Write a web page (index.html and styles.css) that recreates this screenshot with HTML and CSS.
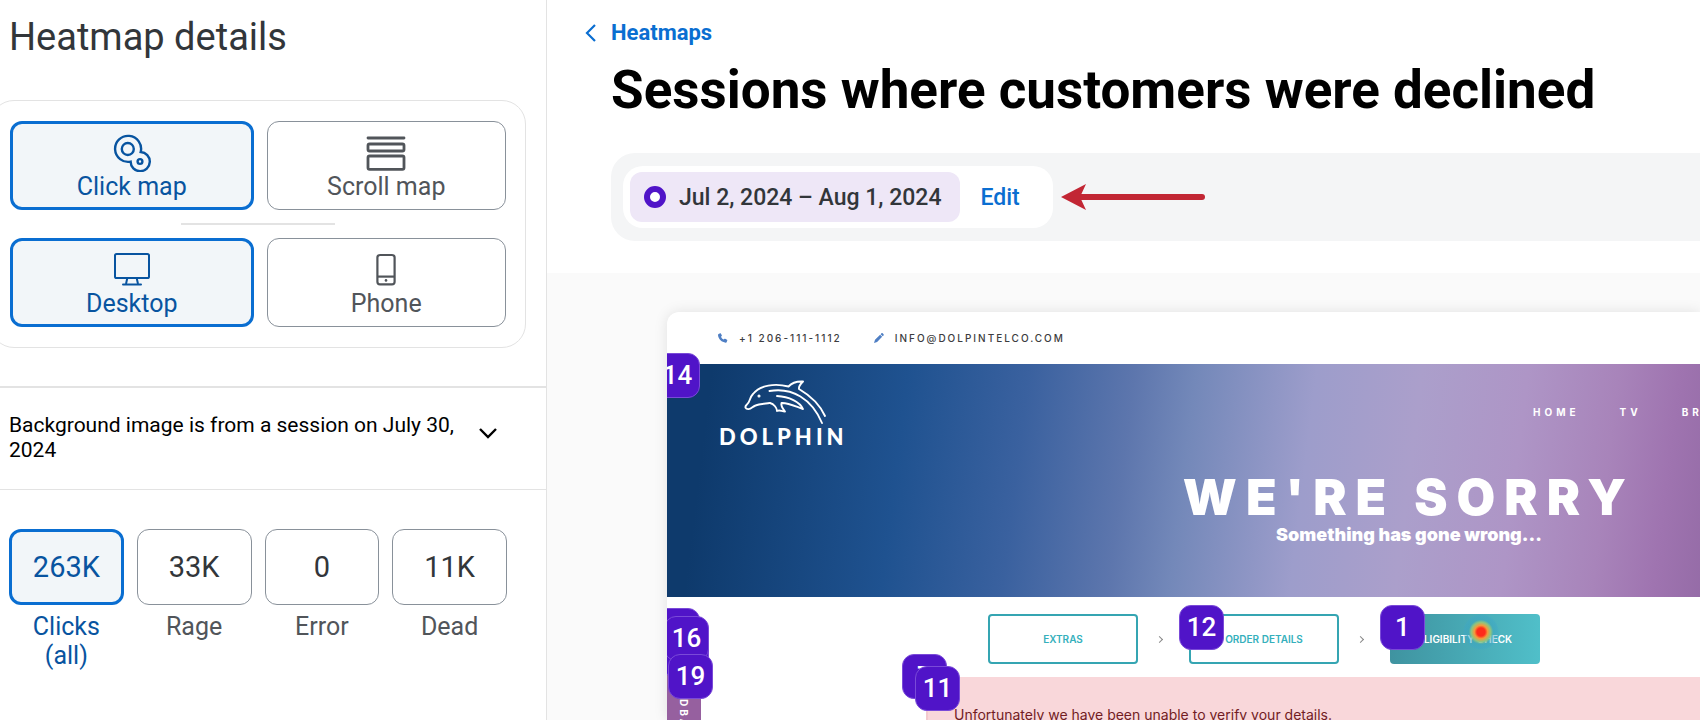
FILE: index.html
```html
<!DOCTYPE html>
<html lang="en">
<head>
    <meta charset="UTF-8">
    <meta name="viewport" content="width=device-width, initial-scale=1.0">
    <title>Heatmap details</title>
    <link rel="stylesheet" href="styles.css">
</head>
<body>
    <aside class="sidebar">
        <h2>Heatmap details</h2>
        <div class="options">
            <div class="option-row">
                <button class="option selected">
                    <svg width="38" height="38" viewBox="0 0 38 38" fill="none" stroke="currentColor" stroke-width="2.4">
                        <path d="M17.6 27.6A13 13 0 1 1 27.7 18A9.6 9.6 0 1 1 17.6 27.6Z"/>
                        <circle cx="14.8" cy="15" r="6"/>
                        <circle cx="27" cy="27.5" r="2.4"/>
                    </svg>
                    <span>Click map</span>
                </button>
                <button class="option">
                    <svg width="40" height="38" viewBox="0 0 40 38" fill="none" stroke="currentColor" stroke-width="2.8">
                        <path d="M2 4h36" stroke-linecap="round"/>
                        <rect x="2" y="10" width="36" height="7" rx="1.6"/>
                        <rect x="2" y="22" width="36" height="13.4" rx="1.6"/>
                    </svg>
                    <span>Scroll map</span>
                </button>
            </div>
            <hr class="option-line">
            <div class="option-row">
                <button class="option selected">
                    <svg width="38" height="38" viewBox="0 0 38 38" fill="none" stroke="currentColor" stroke-width="2">
                        <rect x="2" y="3" width="34" height="24" rx="1.6"/>
                        <path d="M14.2 27.5L13 33M23.8 27.5L25 33"/>
                        <path d="M10 33.5h18" stroke-linecap="round"/>
                    </svg>
                    <span>Desktop</span>
                </button>
                <button class="option">
                    <svg width="38" height="38" viewBox="0 0 38 38" fill="none" stroke="currentColor" stroke-width="2.2">
                        <rect x="10.4" y="4" width="17.2" height="29.4" rx="2.6"/>
                        <path d="M10.4 25.6h17.2"/>
                        <circle cx="19" cy="29.4" r="1.3" fill="currentColor" stroke="none"/>
                    </svg>
                    <span>Phone</span>
                </button>
            </div>
        </div>
        <div class="background-info">
            <p>Background image is from a session on July 30, 2024</p>
            <button class="expand" aria-label="Expand">
                <svg width="20" height="12" viewBox="0 0 20 12" fill="none" stroke="currentColor" stroke-width="2.4">
                    <path d="M2 2l8 8 8-8"/>
                </svg>
            </button>
        </div>
        <div class="stats">
            <button class="stat selected"><span class="stat-value">263K</span><span>Clicks (all)</span></button>
            <button class="stat"><span class="stat-value">33K</span><span>Rage</span></button>
            <button class="stat"><span class="stat-value">0</span><span>Error</span></button>
            <button class="stat"><span class="stat-value">11K</span><span>Dead</span></button>
        </div>
    </aside>

    <main class="main">
        <header class="page-header">
            <a class="back" href="#">
                <svg width="12" height="20" viewBox="0 0 12 20" fill="none" stroke="currentColor" stroke-width="2.2">
                    <path d="M10 2l-8 8 8 8"/>
                </svg>
                Heatmaps
            </a>
            <h1>Sessions where customers were declined</h1>
            <div class="filter-bar">
                <div class="filter">
                    <span class="date-chip"><i class="ring"></i>Jul 2, 2024 – Aug 1, 2024</span>
                    <button class="edit">Edit</button>
                </div>
                <svg class="arrow" width="146" height="26" viewBox="0 0 146 26">
                    <path d="M20 13h121" stroke="#c22634" stroke-width="6" stroke-linecap="round"/>
                    <path d="M0 13L25 0L19 13L25 26Z" fill="#c22634"/>
                </svg>
            </div>
        </header>

        <section class="viewer">
            <div class="canvas">
                <div class="site">
                    <div class="contact">
                        <span>
                            <svg width="10" height="10" viewBox="0 0 11 11" fill="#4f7fc4">
                                <path d="M.6 1.2L2.4.3c.3-.1.5 0 .7.3l1.1 1.8c.2.3.1.6-.1.8l-.8.8c.5 1.3 1.6 2.5 2.9 3.2l.9-.8c.2-.2.5-.3.8-.1l2 1.2c.3.2.4.4.3.7l-.6 1.7c-.2.5-.6.8-1.1.7C4 10.2.6 6.8 0 2.5 0 2 .1 1.5.6 1.2z"/>
                            </svg>
                            +1 206-111-1112
                        </span>
                        <span>
                            <svg width="10" height="10" viewBox="0 0 11 11" fill="#4f7fc4">
                                <path d="M7.3 1.3L8.2.4c.4-.4.9-.4 1.3 0l1 1c.4.4.4.9 0 1.3l-.9.9zM6.7 1.9L9 4.200 3.4 9.8 0 11l1.1-3.5z"/>
                            </svg>
                            INFO@DOLPINTELCO.COM
                        </span>
                    </div>
                    <div class="hero">
                        <div class="hero-top">
                            <div class="logo">
                                <svg width="84" height="46" viewBox="0 0 84 46" fill="none" stroke="#fff" stroke-width="1.9" stroke-linecap="round" stroke-linejoin="round">
                                    <path d="M81 37C76 26 67 17 55 10c-.5-2.500 1.5-5 4-7.500-6-.3-11 1-14.500 5C31 4 16 6 9 15 5 19 6.500 23 2.500 26c-2 2-1 4.300 2 4.100 3-.2 4-2.500 7-3.600 4-1.600 9-1.800 14-2.500"/>
                                    <path d="M26 24c4 1 7 5 7 8 3-1.500 4.500.5 8 .5-2-2.500-4.500-5.500-3.500-8.500 6-.5 13 3 21.500 6-3-7-14-12.500-26-13"/>
                                    <path d="M25.500 12C48 8 68 20 78 44"/>
                                    <circle cx="15" cy="17" r=".6" fill="#fff"/>
                                </svg>
                                <span>DOLPHIN</span>
                            </div>
                            <nav class="site-nav">
                                <a href="#">HOME</a>
                                <a href="#">TV</a>
                                <a href="#">BROADBAND</a>
                            </nav>
                        </div>
                        <h2>WE'RE SORRY</h2>
                        <p>Something has gone wrong...</p>
                    </div>
                    <div class="steps">
                        <button class="step">EXTRAS</button>
                        <span class="step-arrow"></span>
                        <button class="step">ORDER DETAILS</button>
                        <span class="step-arrow"></span>
                        <button class="step current">ELIGIBILITY CHECK</button>
                    </div>
                    <div class="alert">Unfortunately we have been unable to verify your details.</div>
                    <div class="feedback">FEEDBACK</div>
                </div>

                <!-- click ranks over the page -->
                <span class="badge b14">14</span>
                <span class="badge b15"></span>
                <span class="badge b17"></span>
                <span class="badge b16">16</span>
                <span class="badge b19">19</span>
                <span class="badge b7">7</span>
                <span class="badge b11">11</span>
                <span class="badge b12">12</span>
                <span class="badge b1">1</span>
                <i class="heat"></i>
            </div>
        </section>
    </main>
</body>
</html>
```
FILE: styles.css
```css
* {
    box-sizing: border-box;
}
body {
    margin: 0;
    display: flex;
    height: 100vh;
    overflow: hidden;
    font-family: Roboto, 'Liberation Sans', sans-serif;
    background: #fff;
    color: #000;
}
h1, h2, p {
    margin: 0;
}
button {
    padding: 0;
    border: 0;
    background: none;
    font-family: inherit;
    cursor: pointer;
}
a {
    text-decoration: none;
}
svg {
    display: block;
    flex: none;
}

/* sidebar */
.sidebar {
    flex: 0 0 547px;
    border-right: 1px solid #e3e3e3;
}
.sidebar h2 {
    padding: 14px 9px 0;
    font-size: 38px;
    line-height: 46px;
    font-weight: 400;
    color: #32363a;
}
.options {
    margin: 40px 20px 0 -10px;
    padding: 20px 19px;
    border: 1px solid #e3e3e3;
    border-radius: 24px;
}
.option-row {
    display: flex;
    gap: 13px;
}
.option {
    box-sizing: content-box;
    flex: 1;
    display: flex;
    flex-direction: column;
    align-items: center;
    justify-content: center;
    height: 83px;
    padding-top: 4px;
    border: 1px solid #89919a;
    border-radius: 12px;
    color: #51555a;
    font-size: 25px;
    line-height: 30px;
}
.option.selected {
    height: 79px;
    border: 3px solid #0a6ed1;
    background: #f2f6f9;
    color: #0854a0;
}
.option-line {
    width: 154px;
    height: 2px;
    margin: 13px auto;
    border: 0;
    background: #e3e3e3;
}
.background-info {
    display: flex;
    align-items: flex-start;
    justify-content: space-between;
    height: 104px;
    margin-top: 38px;
    padding: 25px 48px 0 9px;
    border-top: 2px solid #e3e3e3;
    border-bottom: 1px solid #e3e3e3;
}
.background-info p {
    width: 456px;
    font-size: 21px;
    line-height: 25px;
}
.expand {
    margin-top: 14px;
}
.stats {
    display: grid;
    grid-template-columns: repeat(4, 1fr);
    gap: 13px;
    padding: 39px 39px 0 9px;
}
.stat {
    display: flex;
    flex-direction: column;
    gap: 7px;
    color: #51555a;
    font-size: 25px;
    line-height: 29px;
}
.stat span {
    width: 100%;
    padding: 0 16px;
}
.stat .stat-value {
    display: flex;
    align-items: center;
    justify-content: center;
    height: 76px;
    padding: 0;
    border: 1px solid #89919a;
    border-radius: 12px;
    color: #32363a;
    font-size: 29px;
}
.stat.selected, .stat.selected .stat-value {
    color: #0854a0;
}
.stat.selected .stat-value {
    border: 3px solid #0a6ed1;
    background: #f2f6f9;
}

/* page header */
.main {
    flex: 1;
    min-width: 0;
    display: flex;
    flex-direction: column;
}
.page-header {
    padding: 20px 0 32px 64px;
}
.back {
    display: flex;
    align-items: center;
    gap: 14px;
    margin-left: -26px;
    font-size: 22px;
    line-height: 26px;
    font-weight: 700;
    color: #0a6ed1;
}
h1 {
    margin-top: 13px;
    font-size: 53px;
    line-height: 62px;
    font-weight: 700;
    white-space: nowrap;
}
.filter-bar {
    display: flex;
    align-items: center;
    gap: 8px;
    height: 88px;
    margin-top: 32px;
    padding-left: 12px;
    border-radius: 24px 0 0 24px;
    background: #f4f5f6;
}
.filter {
    display: flex;
    align-items: center;
    gap: 20px;
    padding: 6px 33px 6px 7px;
    border-radius: 20px;
    background: #fff;
}
.date-chip {
    display: flex;
    align-items: center;
    gap: 13px;
    height: 50px;
    padding: 0 19px 0 14px;
    border-radius: 12px;
    background: #eee7f7;
    color: #32363a;
    font-size: 23px;
    font-weight: 500;
}
.ring {
    width: 22px;
    height: 22px;
    border: 6px solid #5014c8;
    border-radius: 50%;
    background: #fff;
}
.edit {
    color: #0a6ed1;
    font-size: 23px;
    font-weight: 500;
}

/* recorded page */
.viewer {
    flex: 1;
    min-height: 0;
    padding: 39px 0 0 120px;
    background: #fafafa;
}
.canvas {
    position: relative;
    height: 100%;
    overflow: hidden;
    border-radius: 12px 0 0 0;
    background: #fff;
    box-shadow: 0 0 14px rgba(0, 0, 0, 0.1);
}
.site {
    width: 1484px;
    font-family: Inter, Lato, sans-serif;
}
.contact {
    display: flex;
    align-items: center;
    gap: 32px;
    height: 52px;
    padding-left: 51px;
    color: #3c3c40;
    font-size: 10px;
    font-weight: 500;
    letter-spacing: 2px;
}
.contact span {
    display: flex;
    align-items: center;
    gap: 11px;
}
.hero {
    height: 233px;
    background: linear-gradient(97deg, #0e3a6c 3%, #1f5290 16%, #3a619f 24%, #5d76ad 31%, #7388b9 35%, #9d9dcb 43%, #ab9fcb 50%, #ae95c6 57%, #a884ba 63%, #9f74b0 67%, #936aa5 71%);
    color: #fff;
    text-align: center;
}
.hero-top {
    display: flex;
    height: 110px;
}
.logo {
    width: 130px;
    margin: 15px 0 0 52px;
    text-align: left;
    font-family: Lato, sans-serif;
    font-size: 22px;
    line-height: 24px;
    font-weight: 900;
    letter-spacing: 4px;
}
.logo svg {
    margin-left: 25px;
}
.site-nav {
    display: flex;
    gap: 40px;
    margin: 41px 0 0 684px;
    font-size: 10px;
    line-height: 14px;
    font-weight: 700;
    letter-spacing: 4px;
}
.site-nav a {
    color: #fff;
}
.hero h2 {
    font-size: 50px;
    line-height: 46px;
    font-weight: 900;
    letter-spacing: 9px;
}
.hero p {
    font-size: 18px;
    line-height: 30px;
    font-weight: 900;
}
.steps {
    display: flex;
    align-items: center;
    margin-left: 321px;
    height: 80px;
    padding-top: 4px;
}
.step {
    width: 150px;
    height: 50px;
    border: 2px solid #35a5b2;
    border-radius: 4px;
    color: #35b0bc;
    font-size: 10px;
    font-weight: 600;
}
.step.current {
    border: 0;
    background: linear-gradient(90deg, #3f93a0, #50bfc9);
    color: #fff;
}
.step-arrow {
    width: 5px;
    height: 5px;
    margin: 0 27px 0 19px;
    border: solid #888;
    border-width: 1px 1px 0 0;
    transform: rotate(45deg);
}
.alert {
    margin-left: 259px;
    height: 90px;
    padding: 26px 26px;
    border-left: 2px solid #f3c9ce;
    background: #f9d7da;
    color: #721c24;
    font-size: 14px;
    line-height: 24px;
}
.feedback {
    position: absolute;
    left: 0;
    top: 350px;
    width: 34px;
    height: 120px;
    padding-top: 10px;
    background: #96609f;
    color: #fff;
    font-size: 10px;
    line-height: 34px;
    font-weight: 700;
    letter-spacing: 3px;
    writing-mode: vertical-rl;
}
.badge {
    position: absolute;
    width: 45px;
    height: 45px;
    border: 1px solid #7a4ad8;
    border-radius: 12px;
    background: #5014c8;
    color: #fff;
    font-size: 26px;
    line-height: 43px;
    font-weight: 500;
    text-align: center;
}
.b14 { left: -12px; top: 41px; }
.b15 { left: -12px; top: 296px; }
.b17 { left: -3px; top: 322px; }
.b16 { left: -3px; top: 304px; }
.b19 { left: 1px; top: 342px; }
.b7 { left: 235px; top: 342px; }
.b11 { left: 248px; top: 354px; }
.b12 { left: 512px; top: 293px; }
.b1 { left: 713px; top: 293px; }
.heat {
    position: absolute;
    left: 796px;
    top: 302px;
    width: 36px;
    height: 36px;
    border-radius: 50%;
    background: radial-gradient(circle, #ff2a1a 0 16%, #f59a3c 26%, #8fc47e 38%, rgba(60, 165, 190, 0.5) 48%, rgba(60, 165, 200, 0.4) 64%, rgba(60, 165, 200, 0) 72%);
}
```
